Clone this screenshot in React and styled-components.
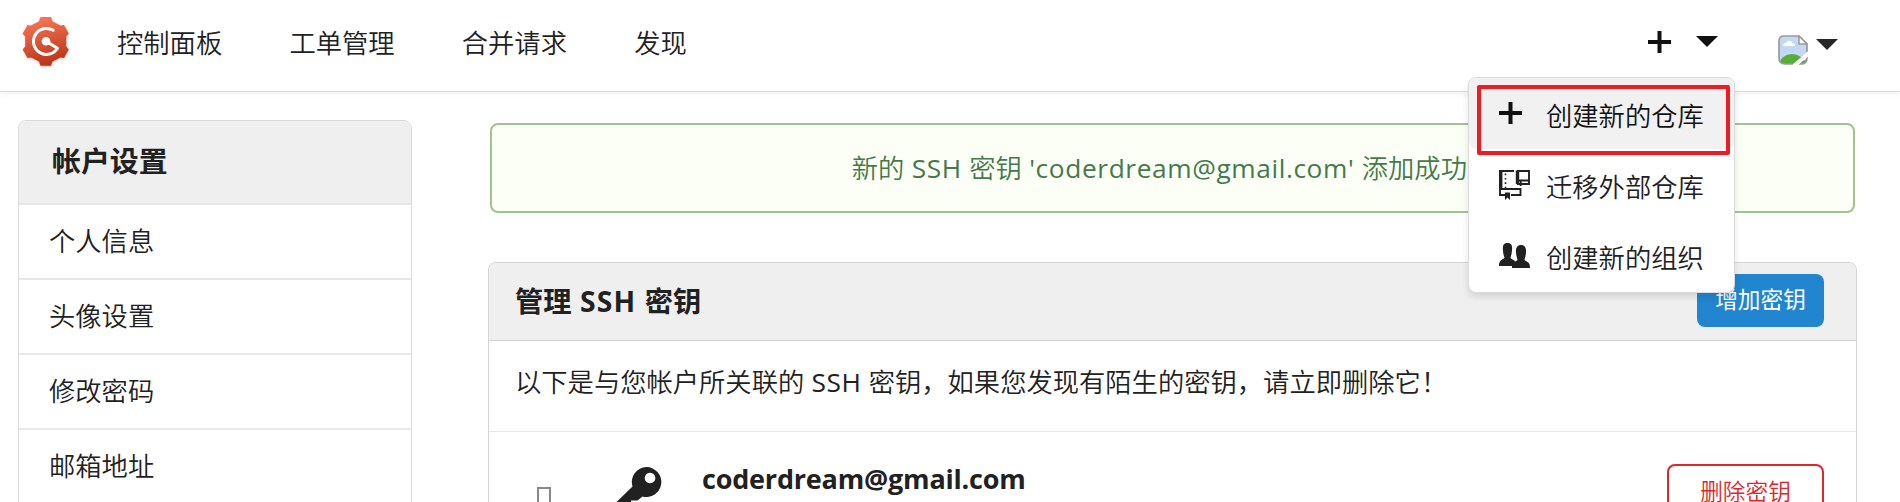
import React from "react";
import styled, { createGlobalStyle } from "styled-components";

const Global = createGlobalStyle`
  * { box-sizing: border-box; }
  body {
    margin: 0;
    width: 1900px;
    height: 502px;
    overflow: hidden;
    background: #fff;
    color: #212121;
    font-family: "Open Sans", "Noto Sans CJK SC", sans-serif;
    font-size: 26.3px;
    font-weight: 350;
    line-height: 36px;
    white-space: nowrap;
  }
`;

const Page = styled.div`
  height: 502px;
  overflow: hidden;
`;

const Latin = styled.span`
  font-weight: ${(p) => p.$weight || 400};
  letter-spacing: ${(p) => p.$spacing || 0}px;
`;

const Navbar = styled.nav`
  position: relative;
  z-index: 2;
  display: flex;
  height: 92px;
  padding: 0 62px 6px 22px;
  align-items: center;
  border-bottom: 1px solid #dbdbdb;
  box-shadow: 0 2px 6px rgba(0, 0, 0, 0.06);
`;

const Logo = styled.svg`
  width: 47px;
  height: 49px;
  margin: 0 48px 2px 0;
  overflow: visible;
  filter: drop-shadow(0 1px 1px rgba(189, 53, 23, 0.3));
`;

const NavLinks = styled.div`
  display: flex;
  gap: 67.2px;
  flex: 1;
`;

const NavLink = styled.a`
  color: #212121;
`;

const NavMenus = styled.div`
  display: flex;
  align-items: center;
  align-self: stretch;
`;

const CreateTrigger = styled.div`
  position: relative;
  display: flex;
  align-items: center;
  gap: 25px;
  margin-right: 60px;
`;

const AvatarTrigger = styled.div`
  display: flex;
  align-items: center;
  gap: 8px;
  padding-top: 14px;
`;

const Caret = styled.span`
  width: 0;
  height: 0;
  margin-bottom: ${(p) => p.$lift || 0}px;
  border: 11px solid transparent;
  border-top-color: ${(p) => p.$color || "#262626"};
  border-bottom: 0;
`;

const Dropdown = styled.div`
  position: absolute;
  top: 46px;
  right: -17px;
  width: 267px;
  height: 216px;
  border: 1px solid #dbdbdc;
  border-radius: 8px;
  background: #fff;
  box-shadow: 0 4px 6px rgba(34, 36, 38, 0.12);
`;

const DropdownItem = styled.div`
  display: flex;
  align-items: center;
  height: 71px;
  padding: 5px 0 0 30px;
  border-radius: 8px;
  color: ${(p) => (p.$active ? "#111" : "#212121")};
  background: ${(p) => (p.$active ? "#f1f1f1" : "transparent")};
`;

const ItemIcon = styled.svg`
  width: 31px;
  height: 31px;
  margin: 0 16px 4px 0;
`;

const Highlight = styled.div`
  position: absolute;
  top: 7px;
  left: 8px;
  width: 253px;
  height: 70px;
  border: 4px solid #ed1c24;
  border-radius: 2px;
`;

const Content = styled.main`
  display: flex;
  align-items: flex-start;
  padding: 28px 43px 0 18px;
`;

const Sidebar = styled.aside`
  width: 394px;
  min-height: 420px;
  margin-right: 76px;
  border: 1px solid #dbdbdc;
  border-radius: 8px;
  overflow: hidden;
`;

const SidebarTitle = styled.div`
  height: 82px;
  padding: 22px 33px;
  background: #efefef;
  font-size: 28.9px;
  font-weight: 700;
`;

const SidebarItem = styled.a`
  display: block;
  height: 75px;
  padding: 18px 30px;
  border-top: 2px solid #e7e7e7;
`;

const Main = styled.section`
  flex: 1;
`;

const Message = styled.div`
  height: 90px;
  margin: 3px 2px 49px;
  padding: 25px 0;
  border: 2px solid #a3c293;
  border-radius: 8px;
  background: #fcfff5;
  color: #46794a;
  text-align: center;
`;

const Panel = styled.div`
  height: 400px;
  border: 1px solid #d4d4d5;
  border-radius: 8px 8px 0 0;
  overflow: hidden;
`;

const PanelHeader = styled.header`
  display: flex;
  align-items: center;
  justify-content: space-between;
  height: 78px;
  padding: 0 32px 2px 26px;
  border-bottom: 1px solid #d4d4d5;
  background: #efefef;
  font-size: 28.3px;
  font-weight: 700;
`;

const Button = styled.button`
  height: ${(p) => (p.$outline ? 58 : 53)}px;
  width: ${(p) => (p.$outline ? 157 : 127)}px;
  padding: 0 0 2px;
  border: ${(p) => (p.$outline ? "2px solid #db2828" : "0")};
  border-radius: 8px;
  background: ${(p) => (p.$outline ? "#fff" : "#2185d0")};
  color: ${(p) => (p.$outline ? "#db2828" : "#fff")};
  font: ${(p) => (p.$outline ? 350 : 400)} 22.7px/32px "Open Sans", "Noto Sans CJK SC", sans-serif;
`;

const Description = styled.p`
  height: 91px;
  margin: 0;
  padding: 23px 26px;
  border-bottom: 1px solid #e7e7e7;
`;

const KeyRow = styled.div`
  display: flex;
  align-items: flex-start;
  padding: 32px 32px 0 48px;
`;

const MissingGlyph = styled.span`
  width: 14px;
  height: 26px;
  margin: 23px 65px 0 0;
  border: 2px solid #888;
`;

const KeyIcon = styled.svg`
  width: 50px;
  height: 50px;
  margin: 3px 36px 0 0;
`;

const KeyName = styled.strong`
  flex: 1;
  font-size: 27px;
  font-weight: 700;
  line-height: 29px;
  letter-spacing: -0.2px;
`;

const sidebarItems = ["个人信息", "头像设置", "修改密码", "邮箱地址"];

export default function App() {
  return (
    <Page>
      <Global />
      <Navbar>
        <Logo viewBox="0 0 47 49">
          <defs>
            <linearGradient id="gear" x1="15" y1="0" x2="28" y2="49" gradientUnits="userSpaceOnUse">
              <stop offset="0" stopColor="#f5795a" />
              <stop offset="1" stopColor="#b93214" />
            </linearGradient>
          </defs>
          <path
            fill="url(#gear)"
            d="M18.500 0h10.500l1.500 4.300 8 4.200 3.500-.5 4.800 8.500-2.500 3v10l2.500 3-4.800 8.500-3.500-.5-8 4-1.500 4.200H18.500l-1.500-4.200-8-4-3.500.5L.700 32.500l2.500-3v-10l-2.500-3L5.500 8l3.500.5 8-4.200z"
          />
          <path d="M31.200 13.300A13 13 0 1 0 35.500 31.300L24 24.300" fill="none" stroke="#fff" strokeWidth="3" strokeLinecap="round" strokeLinejoin="round" />
          <circle cx="24" cy="24.300" r="4.300" fill="#fff" />
        </Logo>
        <NavLinks>
          <NavLink>控制面板</NavLink>
          <NavLink>工单管理</NavLink>
          <NavLink>合并请求</NavLink>
          <NavLink>发现</NavLink>
        </NavLinks>
        <NavMenus>
          <CreateTrigger>
            <svg width="23" height="24" viewBox="0 0 23 24">
              <path d="M11.500 0v22M0 11h23" stroke="#111" strokeWidth="4" />
            </svg>
            <Caret $color="#111" $lift={3} />
            <Dropdown>
              <DropdownItem $active>
                <ItemIcon viewBox="0 0 31 31">
                  <path d="M11.500 4v22M0 15h23" stroke="#111" strokeWidth="4" />
                </ItemIcon>
                创建新的仓库
              </DropdownItem>
              <DropdownItem>
                <ItemIcon viewBox="0 0 31 31">
                  <path d="M15 2H1v24h5M12 26h9.500v-6H2" fill="none" stroke="#212121" strokeWidth="1.900" />
                  <path d="M1.700 1.500V20M18.500 1.500V15" stroke="#212121" strokeWidth="3.400" />
                  <path d="M18 2h12v13H18M18 11.500h12M21.700 11v6" fill="none" stroke="#212121" strokeWidth="1.900" />
                  <path d="M6.500 4.500v15" stroke="#212121" strokeWidth="1.600" strokeDasharray="1.700 2.700" />
                  <path d="M6 23.500h5v7.500l-2.500-2.500L6 31z" fill="#212121" />
                </ItemIcon>
                迁移外部仓库
              </DropdownItem>
              <DropdownItem>
                <ItemIcon viewBox="0 0 31 31">
                  <path fill="#212121" d="M0 26c0-5 2-6 5-7.500 1-1 0-2-.5-4C3 6 4 3 8.500 3s5.500 3 4 11c-.5 3-1.500 3.500-.5 4.500l4 2.500-1 5z" />
                  <path fill="#212121" d="M13 28c0-4 1-5.500 5-7.500 1-1 0-2-.5-4.500-1.500-7 0-11 4.500-11s6 4 4.500 11c-.5 2.500-1.500 3.500-.5 4.500 4 2 5 3 5 7.500z" />
                </ItemIcon>
                创建新的组织
              </DropdownItem>
              <Highlight />
            </Dropdown>
          </CreateTrigger>
          <AvatarTrigger>
            <svg width="30" height="30" viewBox="0 0 30 30">
              <clipPath id="picture">
                <path d="M6 1h15l8 8v14q0 6-6 6H7q-6 0-6-6V6q0-5 5-5z" />
              </clipPath>
              <g clipPath="url(#picture)">
                <path d="M0 0h30v30H0z" fill="#c5d7f6" />
                <ellipse cx="14" cy="28" rx="12" ry="9" fill="#57ae39" />
                <path d="M24 27l5-3v6h-7z" fill="#57ae39" />
                <path d="M5 11q0-3 3-3 1-3 4-2 2 0 2 2 3 0 3 3z" fill="#fff" />
              </g>
              <path d="M6 1h15l8 8v14q0 6-6 6H7q-6 0-6-6V6q0-5 5-5z" fill="none" stroke="#999" strokeWidth="1.700" />
              <path d="M21 1v8h8z" fill="#fff" stroke="#999" strokeWidth="1.500" />
              <path d="M16 31L31 18" stroke="#fff" strokeWidth="4" />
            </svg>
            <Caret $lift={10} />
          </AvatarTrigger>
        </NavMenus>
      </Navbar>
      <Content>
        <Sidebar>
          <SidebarTitle>帐户设置</SidebarTitle>
          {sidebarItems.map((label) => (
            <SidebarItem key={label}>{label}</SidebarItem>
          ))}
        </Sidebar>
        <Main>
          <Message>
            新的<Latin $spacing={0.6}> SSH </Latin>密钥
            <Latin $spacing={0.6}> 'coderdream@gmail.com' </Latin>添加成功！
          </Message>
          <Panel>
            <PanelHeader>
              <div>
                管理<Latin $weight={700} $spacing={1.1}> SSH </Latin>密钥
              </div>
              <Button>增加密钥</Button>
            </PanelHeader>
            <Description>
              以下是与您帐户所关联的<Latin $spacing={0.5}> SSH </Latin>密钥，如果您发现有陌生的密钥，请立即删除它！
            </Description>
            <KeyRow>
              <MissingGlyph />
              <KeyIcon viewBox="0 0 50 50">
                <path
                  fillRule="evenodd"
                  fill="#212121"
                  d="M30.500 0a15 15 0 1 1-4 29.500L21.500 33.500H15V40H10v6H0V35.500L16.500 19.500A15 15 0 0 1 30.500 0zM34 5.700a5.300 5.300 0 1 0 .1 0z"
                />
              </KeyIcon>
              <KeyName>coderdream@gmail.com</KeyName>
              <Button $outline>删除密钥</Button>
            </KeyRow>
          </Panel>
        </Main>
      </Content>
    </Page>
  );
}
